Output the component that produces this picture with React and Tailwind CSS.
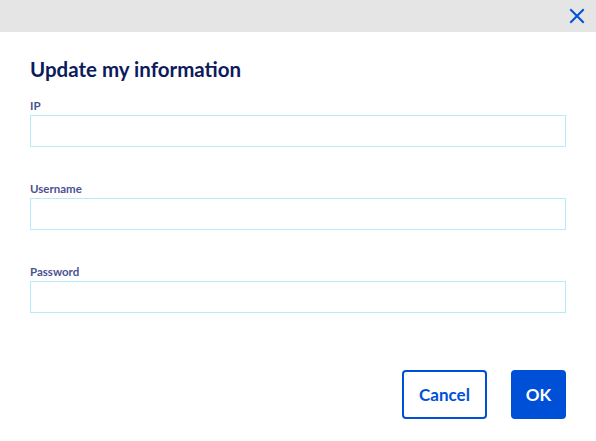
import React from "react";

function Field({ label }) {
  return (
    <div className="flex flex-col">
      <label className="text-[11.5px] font-bold leading-[14px] text-[#4b5293] mb-[2px]">{label}</label>
      <input className="h-8 border border-[#b5ebfa] bg-white outline-none px-2" />
    </div>
  );
}

export default function App() {
  return (
    <div className="w-[596px] h-[441px] bg-white flex flex-col" style={{ fontFamily: "Lato, 'Noto Sans', sans-serif" }}>
      <div className="h-8 bg-[#e5e5e5] flex items-center justify-end pr-[11px]">
        <svg width="16" height="16" viewBox="0 0 16 16" className="text-[#0050d7]">
          <path d="M2 2 L14 14 M14 2 L2 14" stroke="currentColor" strokeWidth="2" strokeLinecap="square" fill="none" />
        </svg>
      </div>
      <div className="flex flex-col px-[30px]">
        <h1 className="mt-[23px] text-[20.5px] font-bold leading-[28px] text-[#0c1b5c]">Update my information</h1>
        <div className="mt-[16px] flex flex-col gap-[35px]">
          <Field label="IP" />
          <Field label="Username" />
          <Field label="Password" />
        </div>
        <div className="mt-[57px] flex justify-end gap-6">
          <button className="w-[85px] h-[49px] border-2 border-[#0050d7] rounded-[4px] text-[#0050d7] font-bold text-[17px]">Cancel</button>
          <button className="w-[55px] h-[49px] bg-[#0050d7] rounded-[4px] text-white font-bold text-[17px]">OK</button>
        </div>
      </div>
    </div>
  );
}
